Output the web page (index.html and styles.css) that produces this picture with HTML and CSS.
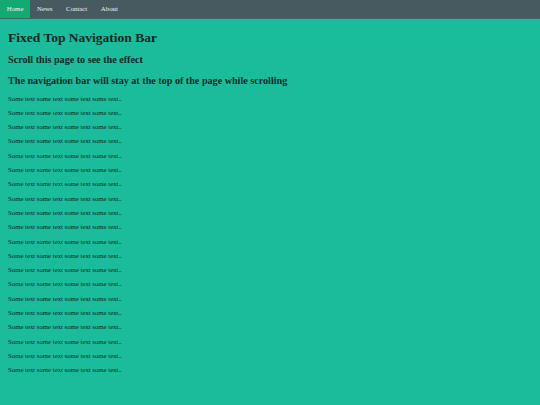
FILE: index.html
```html
<!DOCTYPE html>
<html>
<head>
<meta charset="utf-8">
<link rel="stylesheet" href="styles.css">
</head>
<body>
<ul class="navbar">
  <li><a class="active" href="#home">Home</a></li>
  <li><a href="#news">News</a></li>
  <li><a href="#contact">Contact</a></li>
  <li><a href="#about">About</a></li>
</ul>
<div class="main">
  <h1>Fixed Top Navigation Bar</h1>
  <h2>Scroll this page to see the effect</h2>
  <h2>The navigation bar will stay at the top of the page while scrolling</h2>
  <p>Some text some text some text some text..</p>
  <p>Some text some text some text some text..</p>
  <p>Some text some text some text some text..</p>
  <p>Some text some text some text some text..</p>
  <p>Some text some text some text some text..</p>
  <p>Some text some text some text some text..</p>
  <p>Some text some text some text some text..</p>
  <p>Some text some text some text some text..</p>
  <p>Some text some text some text some text..</p>
  <p>Some text some text some text some text..</p>
  <p>Some text some text some text some text..</p>
  <p>Some text some text some text some text..</p>
  <p>Some text some text some text some text..</p>
  <p>Some text some text some text some text..</p>
  <p>Some text some text some text some text..</p>
  <p>Some text some text some text some text..</p>
  <p>Some text some text some text some text..</p>
  <p>Some text some text some text some text..</p>
  <p>Some text some text some text some text..</p>
  <p>Some text some text some text some text..</p>
</div>
</body>
</html>
```
FILE: styles.css
```css
html, body {
  margin: 0;
  padding: 0;
  background: #1abc9c;
  font-family: "Liberation Serif", "Times New Roman", serif;
  color: #0b2621;
  height: 100%;
  overflow: hidden;
}
.navbar {
  list-style: none;
  margin: 0;
  padding: 0;
  display: flex;
  height: 18px;
  background: #465a60;
  border-bottom: 1px solid #3a6a66;
}
.navbar a {
  display: block;
  color: #f2f2f2;
  text-decoration: none;
  font-size: 6.8px;
  line-height: 18px;
  padding: 0 6.8px;
}
.navbar a.active {
  background: #14a873;
}
.main {
  padding: 0 8px;
}
h1 {
  font-size: 13.5px;
  line-height: 15.4px;
  margin: 11px 0 9px;
}
h2 {
  font-size: 10.15px;
  line-height: 11.6px;
  margin: 0 0 8.5px;
}
p {
  font-size: 6.75px;
  line-height: 7.7px;
  margin: 0 0 6.6px;
}
```
